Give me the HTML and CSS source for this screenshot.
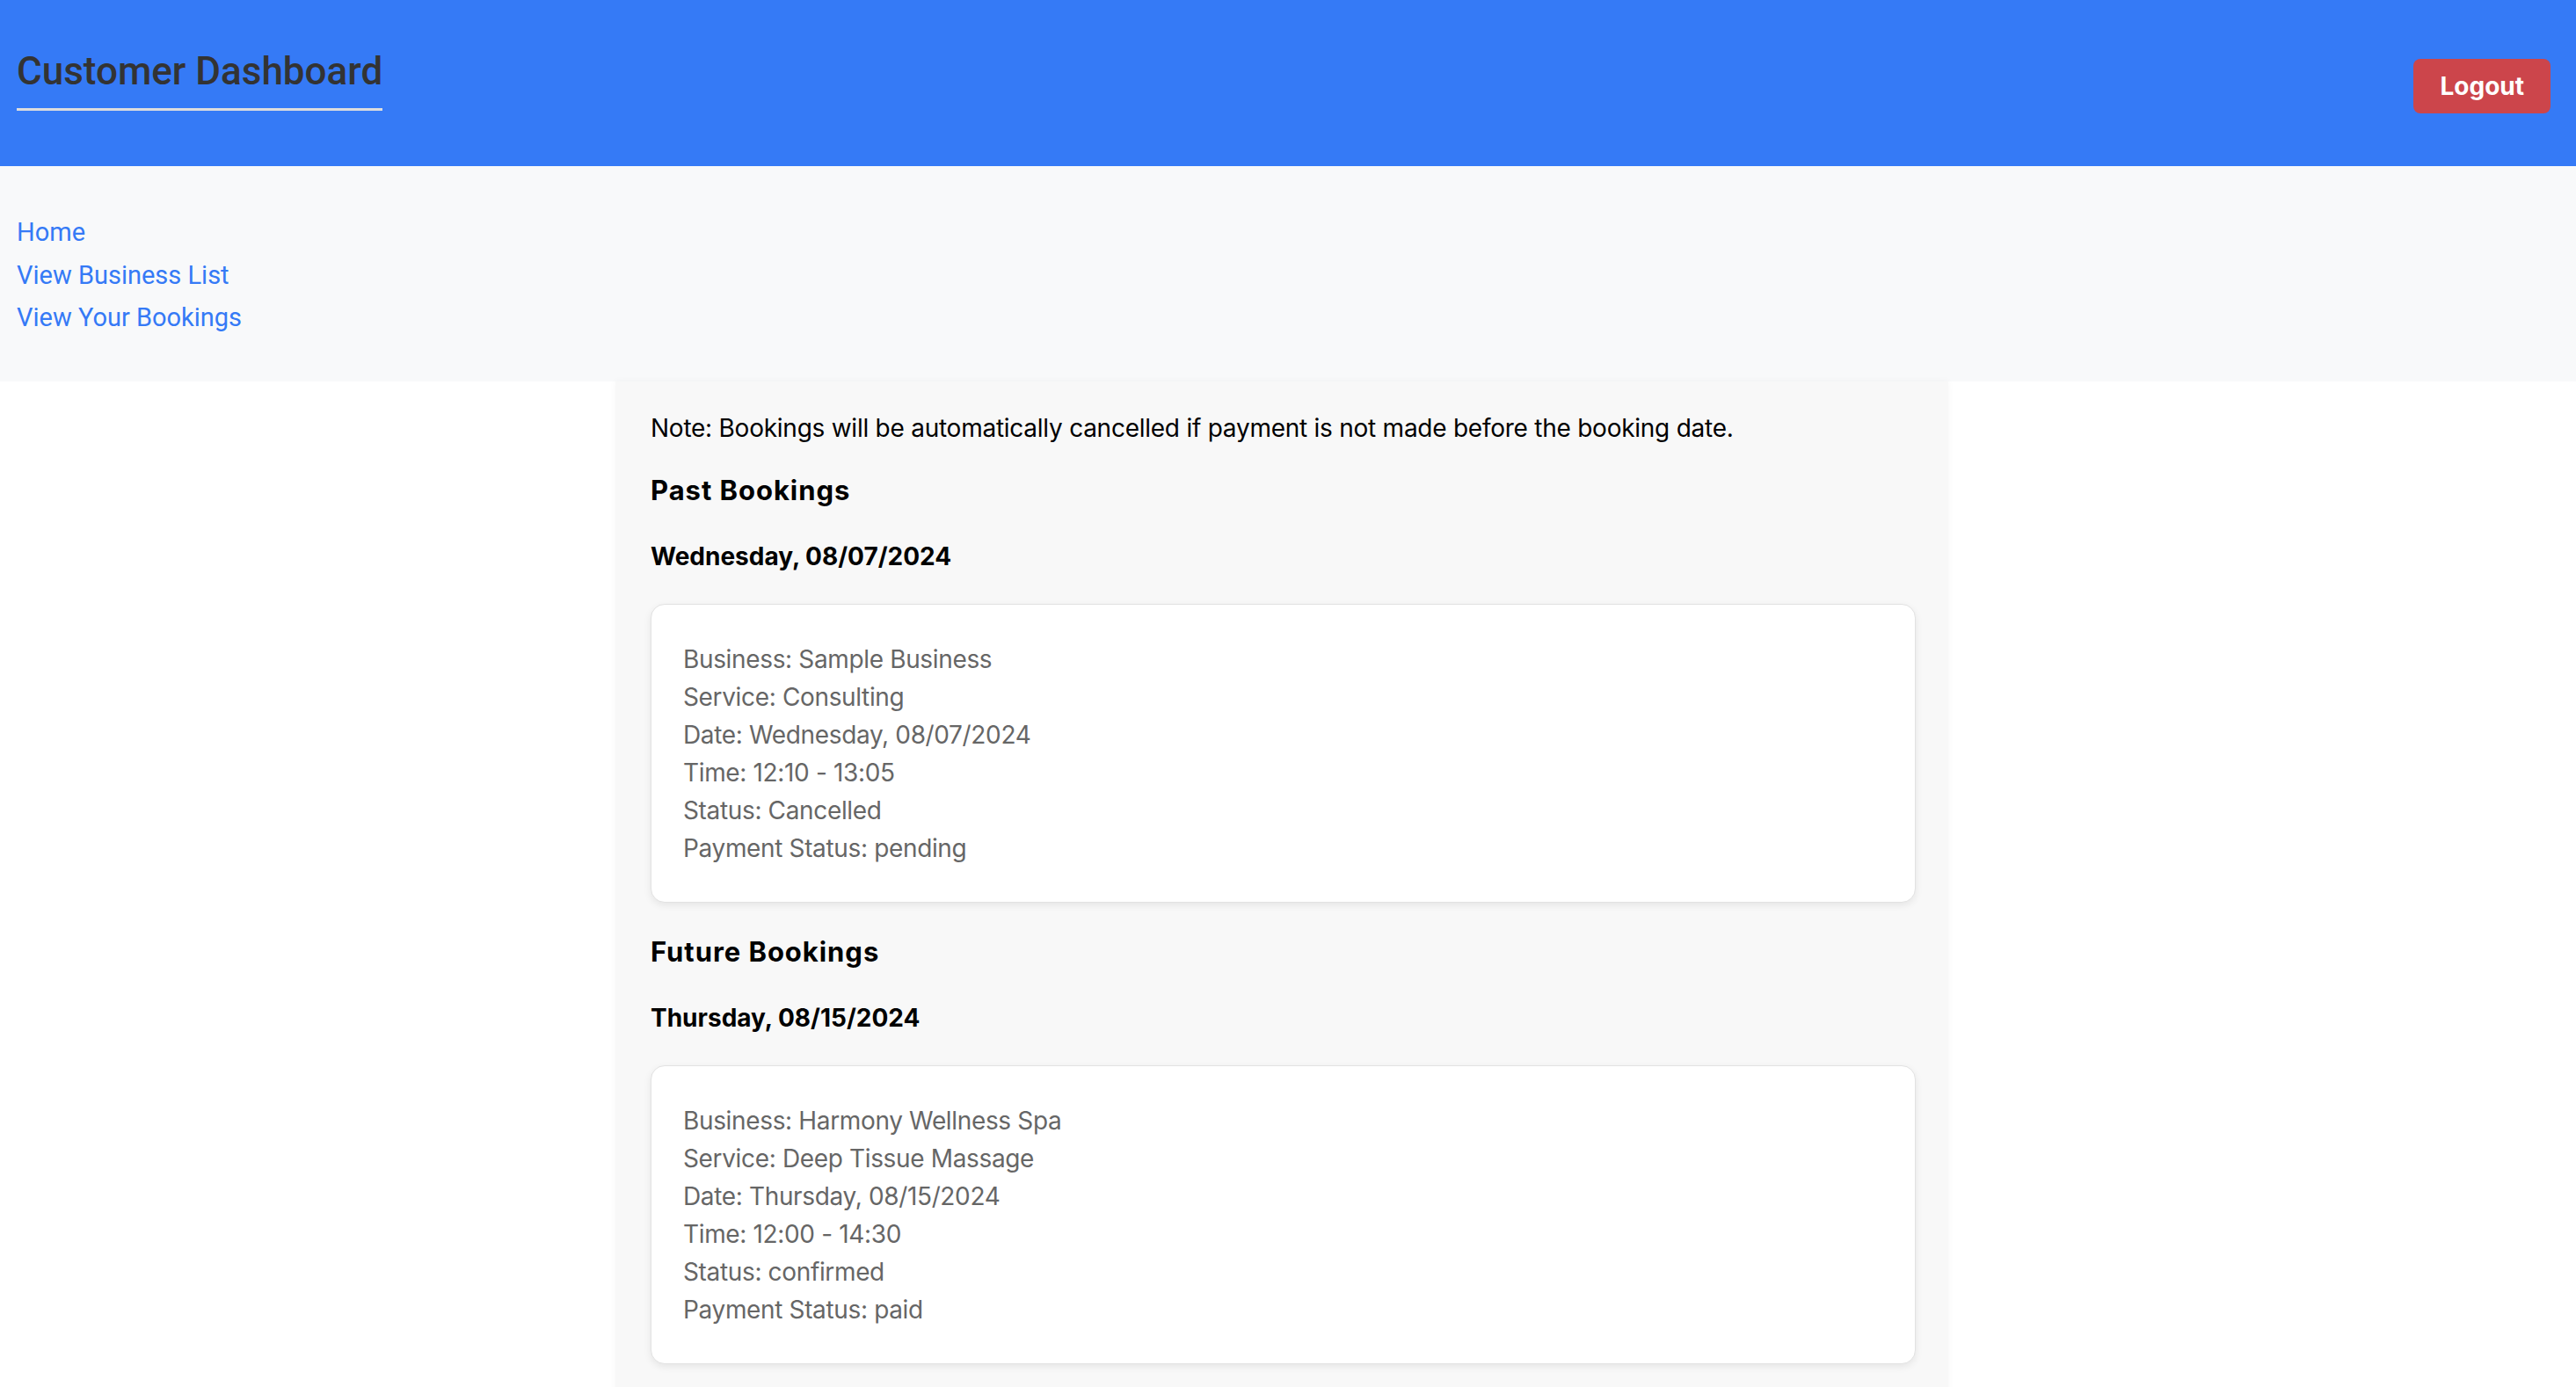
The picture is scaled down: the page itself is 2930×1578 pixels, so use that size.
FILE: index.html
```html
<!DOCTYPE html>
<html lang="en">
<head>
<meta charset="utf-8">
<title>Customer Dashboard</title>
<link rel="stylesheet" href="styles.css">
</head>
<body>
<header class="topbar">
  <h1 class="title">Customer Dashboard</h1>
  <button class="logout" type="button">Logout</button>
</header>
<nav class="sidenav">
  <a href="#" class="navlink">Home</a>
  <a href="#" class="navlink">View Business List</a>
  <a href="#" class="navlink">View Your Bookings</a>
</nav>
<div class="page">
  <main class="content">
    <p class="note">Note: Bookings will be automatically cancelled if payment is not made before the booking date.</p>

    <h2 class="section-title">Past Bookings</h2>
    <h3 class="day-title">Wednesday, 08/07/2024</h3>
    <div class="card">
      <div class="line">Business: Sample Business</div>
      <div class="line">Service: Consulting</div>
      <div class="line">Date: Wednesday, 08/07/2024</div>
      <div class="line">Time: 12:10 - 13:05</div>
      <div class="line">Status: Cancelled</div>
      <div class="line">Payment Status: pending</div>
    </div>

    <h2 class="section-title">Future Bookings</h2>
    <h3 class="day-title">Thursday, 08/15/2024</h3>
    <div class="card">
      <div class="line">Business: Harmony Wellness Spa</div>
      <div class="line">Service: Deep Tissue Massage</div>
      <div class="line">Date: Thursday, 08/15/2024</div>
      <div class="line">Time: 12:00 - 14:30</div>
      <div class="line">Status: confirmed</div>
      <div class="line">Payment Status: paid</div>
    </div>
  </main>
</div>
</body>
</html>
```

FILE: styles.css
```css
* { box-sizing: border-box; }

html, body {
  margin: 0;
  padding: 0;
  background: #ffffff;
  font-family: Inter, "Noto Sans", "Liberation Sans", sans-serif;
  color: #000;
}

.topbar {
  height: 189px;
  background: #357af6;
  display: flex;
  align-items: center;
  justify-content: space-between;
  padding: 0 29px 0 19px;
}

.title {
  margin: 0 0 10px 0;
  font-family: Roboto, "Liberation Sans", sans-serif;
  font-size: 44px;
  line-height: 54px;
  font-weight: 500;
  color: #333333;
  padding-bottom: 15px;
  border-bottom: 3px solid #dddddd;
}

.logout {
  margin-top: 7px;
  height: 62px;
  padding: 0 30px;
  background: #cc454b;
  color: #ffffff;
  border: none;
  border-radius: 8px;
  font-family: Inter, "Liberation Sans", sans-serif;
  font-size: 28px;
  font-weight: 700;
}

.sidenav {
  background: #f8f9fa;
  padding: 51px 19px 48px;
  display: flex;
  flex-direction: column;
  align-items: flex-start;
}

.navlink {
  font-family: Roboto, "Liberation Sans", sans-serif;
  color: #357af6;
  text-decoration: none;
  font-size: 29px;
  line-height: 48.5px;
}

.page {
  padding-right: 14px;
}

.content {
  width: 1516px;
  margin: 0 auto;
  background: #f8f8f8;
  box-shadow: 0 0 8px rgba(0, 0, 0, 0.04);
  padding: 32px 37px 40px 40px;
}

.note {
  margin: 0 0 32px 0;
  font-size: 28px;
  line-height: 42px;
  letter-spacing: -0.25px;
  color: #000;
}

.section-title {
  margin: 0 0 40px 0;
  font-size: 31px;
  line-height: 36px;
  font-weight: 700;
  letter-spacing: 0.95px;
}

.day-title {
  margin: 0 0 37px 0;
  font-size: 28px;
  line-height: 34px;
  font-weight: 700;
}

.card {
  background: #ffffff;
  border: 1px solid #e2e2e2;
  border-radius: 16px;
  box-shadow: 0 3px 8px rgba(0, 0, 0, 0.08);
  padding: 41px 37px 39px 36px;
  margin-bottom: 38px;
}

.line {
  font-size: 28px;
  line-height: 43px;
  letter-spacing: -0.35px;
  color: #666666;
}
```
